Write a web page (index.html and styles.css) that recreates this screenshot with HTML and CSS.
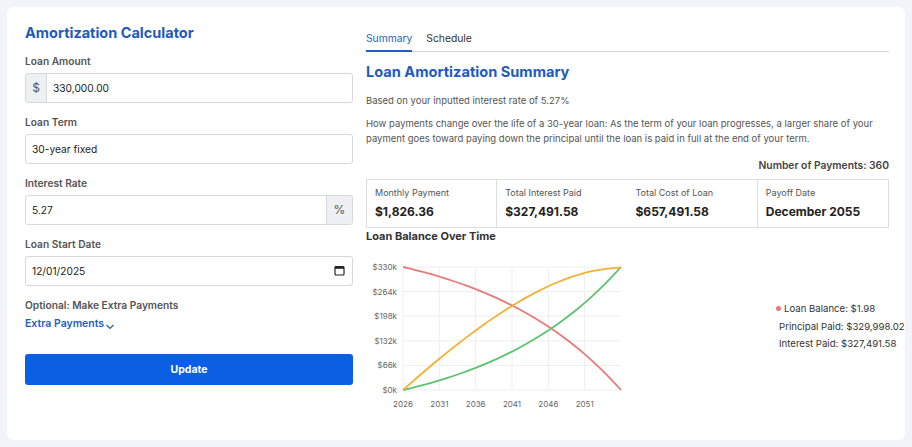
FILE: index.html
```html
<!DOCTYPE html>
<html lang="en">
<head>
<meta charset="utf-8">
<title>Amortization Calculator</title>
<link rel="stylesheet" href="styles.css">
</head>
<body>
<div class="card">
  <section class="form-col">
    <h1 class="title">Amortization Calculator</h1>
    <div class="group">
      <label class="label">Loan Amount</label>
      <div class="field">
        <span class="addon addon-left">$</span>
        <span class="value">330,000.00</span>
      </div>
    </div>
    <div class="group">
      <label class="label">Loan Term</label>
      <div class="field"><span class="value">30-year fixed</span></div>
    </div>
    <div class="group">
      <label class="label">Interest Rate</label>
      <div class="field">
        <span class="value grow">5.27</span>
        <span class="addon addon-right">%</span>
      </div>
    </div>
    <div class="group">
      <label class="label">Loan Start Date</label>
      <div class="field">
        <span class="value grow">12/01/2025</span>
        <svg class="cal" width="11" height="11" viewBox="0 0 11 11"><rect x="1" y="1.5" width="9" height="8.5" rx="1" fill="none" stroke="#222" stroke-width="1.2"/><rect x="1" y="1.5" width="9" height="2.3" fill="#222"/></svg>
      </div>
    </div>
    <div class="label optional">Optional: Make Extra Payments</div>
    <div class="extra">Extra Payments<svg width="10" height="7" viewBox="0 0 10 7"><path d="M1.5 2 L5 5.5 L8.5 2" fill="none" stroke="#1f5fbf" stroke-width="1.2"/></svg></div>
    <button class="btn">Update</button>
  </section>

  <section class="result-col">
    <nav class="tabs">
      <span class="tab active">Summary</span>
      <span class="tab">Schedule</span>
    </nav>
    <h2 class="subtitle">Loan Amortization Summary</h2>
    <p class="note">Based on your inputted interest rate of 5.27%</p>
    <p class="desc">How payments change over the life of a 30-year loan: As the term of your loan progresses, a larger share of your payment goes toward paying down the principal until the loan is paid in full at the end of your term.</p>
    <div class="count">Number of Payments: 360</div>
    <div class="stats">
      <div class="stat sep"><div class="stat-label">Monthly Payment</div><div class="stat-value">$1,826.36</div></div>
      <div class="stat"><div class="stat-label">Total Interest Paid</div><div class="stat-value">$327,491.58</div></div>
      <div class="stat sep"><div class="stat-label">Total Cost of Loan</div><div class="stat-value">$657,491.58</div></div>
      <div class="stat"><div class="stat-label">Payoff Date</div><div class="stat-value">December 2055</div></div>
    </div>
    <h3 class="chart-title">Loan Balance Over Time</h3>
    <div class="chart-row">
      <svg class="chart" width="270" height="170" viewBox="0 0 270 170">
        <g stroke="#eeeeee" stroke-width="1">
          <line x1="37" y1="18" x2="255" y2="18"/>
          <line x1="37" y1="42.6" x2="255" y2="42.6"/>
          <line x1="37" y1="67.2" x2="255" y2="67.2"/>
          <line x1="37" y1="91.8" x2="255" y2="91.8"/>
          <line x1="37" y1="116.4" x2="255" y2="116.4"/>
          <line x1="37" y1="141" x2="255" y2="141"/>
          <line x1="37" y1="18" x2="37" y2="141"/>
          <line x1="73.33" y1="18" x2="73.33" y2="141"/>
          <line x1="109.67" y1="18" x2="109.67" y2="141"/>
          <line x1="146" y1="18" x2="146" y2="141"/>
          <line x1="182.33" y1="18" x2="182.33" y2="141"/>
          <line x1="218.67" y1="18" x2="218.67" y2="141"/>
        </g>
        <g class="ylab" text-anchor="end">
          <text x="31" y="21">$330k</text>
          <text x="31" y="45.6">$264k</text>
          <text x="31" y="70.2">$198k</text>
          <text x="31" y="94.8">$132k</text>
          <text x="31" y="119.4">$66k</text>
          <text x="31" y="144">$0k</text>
        </g>
        <g class="xlab" text-anchor="middle">
          <text x="37" y="158">2026</text>
          <text x="73.33" y="158">2031</text>
          <text x="109.67" y="158">2036</text>
          <text x="146" y="158">2041</text>
          <text x="182.33" y="158">2046</text>
          <text x="218.67" y="158">2051</text>
        </g>
        <polyline fill="none" stroke="#e87a7a" stroke-width="1.8" stroke-linejoin="round" points="37,18 44.27,19.73 51.53,21.55 58.8,23.47 66.07,25.49 73.33,27.62 80.6,29.87 87.87,32.24 95.13,34.74 102.4,37.37 109.67,40.15 116.93,43.07 124.2,46.15 131.47,49.4 138.73,52.82 146,56.43 153.27,60.23 160.53,64.24 167.8,68.46 175.07,72.92 182.33,77.61 189.6,82.56 196.87,87.77 204.13,93.26 211.4,99.06 218.67,105.16 225.93,111.59 233.2,118.38 240.47,125.52 247.73,133.05 255,141"/>
        <polyline fill="none" stroke="#5cc46e" stroke-width="1.8" stroke-linejoin="round" points="37,141 44.27,139.27 51.53,137.45 58.8,135.53 66.07,133.51 73.33,131.38 80.6,129.13 87.87,126.76 95.13,124.26 102.4,121.63 109.67,118.85 116.93,115.93 124.2,112.85 131.47,109.6 138.73,106.18 146,102.57 153.27,98.77 160.53,94.76 167.8,90.54 175.07,86.08 182.33,81.39 189.6,76.44 196.87,71.23 204.13,65.74 211.4,59.94 218.67,53.84 225.93,47.41 233.2,40.62 240.47,33.48 247.73,25.95 255,18"/>
        <polyline fill="none" stroke="#f2b134" stroke-width="1.8" stroke-linejoin="round" points="37,141 44.27,134.56 51.53,128.21 58.8,121.96 66.07,115.81 73.33,109.78 80.6,103.86 87.87,98.06 95.13,92.39 102.4,86.85 109.67,81.46 116.93,76.21 124.2,71.12 131.47,66.2 138.73,61.46 146,56.9 153.27,52.53 160.53,48.37 167.8,44.42 175.07,40.71 182.33,37.23 189.6,34.01 196.87,31.05 204.13,28.38 211.4,26.01 218.67,23.94 225.93,22.2 233.2,20.82 240.47,19.79 247.73,19.15 255,18.6"/>
      </svg>
      <div class="legend">
        <div class="legend-row"><span class="dot"></span>Loan Balance: $1.98</div>
        <div class="legend-row">Principal Paid: $329,998.02</div>
        <div class="legend-row">Interest Paid: $327,491.58</div>
      </div>
    </div>
  </section>
</div>
</body>
</html>
```

FILE: styles.css
```css
* { box-sizing: border-box; }
html, body { margin: 0; }
body {
  padding: 7px;
  background: #f3f4f9;
  font-family: Inter, "Noto Sans", "DejaVu Sans", sans-serif;
  color: #333;
}
.card {
  background: #fff;
  border-radius: 6px;
  height: 433px;
  width: 898px;
  padding: 16px 16px 16px 18px;
  display: grid;
  grid-template-columns: 328px 523px;
  column-gap: 13px;
  align-items: start;
  box-shadow: 0 0 2px rgba(0,0,0,0.04);
}
.title {
  margin: 0 0 11px;
  font-size: 14.5px;
  line-height: 20px;
  font-weight: 700;
  color: #1c5bbf;
}
.group { margin-bottom: 12.5px; }
.label {
  display: block;
  font-size: 10.2px;
  line-height: 14px;
  font-weight: 600;
  color: #555;
  margin-bottom: 4.5px;
}
.field {
  display: flex;
  align-items: center;
  height: 30px;
  border: 1px solid #d6d8dc;
  border-radius: 3px;
  overflow: hidden;
  font-size: 10.2px;
  color: #222;
}
.value { padding: 0 6px; }
.grow { flex: 1; }
.addon {
  align-self: stretch;
  display: flex;
  align-items: center;
  justify-content: center;
  background: #eef0f3;
  color: #555;
  font-size: 12px;
}
.addon-left { width: 21px; border-right: 1px solid #d6d8dc; }
.addon-right { width: 26px; border-left: 1px solid #d6d8dc; }
.cal { margin-right: 7px; }
.optional { margin-top: 6px; margin-bottom: 5px; }
.extra {
  font-size: 10.5px;
  line-height: 14px;
  font-weight: 600;
  color: #1f5fbf;
  display: flex;
  align-items: flex-end;
}
.extra svg { margin-left: 1px; margin-bottom: 1px; }
.btn {
  display: block;
  width: 100%;
  height: 31px;
  margin-top: 23px;
  border: 0;
  border-radius: 3px;
  background: #0a5fe3;
  color: #fff;
  font-family: inherit;
  font-size: 10.5px;
  font-weight: 700;
}
.result-col { min-width: 0; }
.tabs {
  display: flex;
  gap: 14px;
  border-bottom: 1px solid #d0d3d8;
}
.tab {
  font-size: 10.3px;
  line-height: 14px;
  padding: 8px 0 5px;
  color: #333;
  font-weight: 400;
  border-bottom: 2px solid transparent;
  margin-bottom: -1px;
}
.tab.active { color: #1f5fbf; border-bottom-color: #1f5fbf; }
.subtitle {
  margin: 10px 0 0;
  font-size: 14.6px;
  line-height: 20px;
  font-weight: 700;
  color: #1c5bbf;
}
.note, .desc {
  margin: 10.5px 0 0;
  font-size: 9.5px;
  line-height: 15px;
  color: #555;
}
.desc { margin-top: 8px; }
.count {
  margin-top: 12.5px;
  text-align: right;
  font-size: 10.3px;
  line-height: 14px;
  font-weight: 600;
  color: #444;
}
.stats {
  margin-top: 7px;
  display: grid;
  grid-template-columns: repeat(4, 1fr);
  border: 1px solid #dcdee2;
  height: 49px;
}
.stat { padding: 7px 0 0 8px; }
.stat.sep { border-right: 1px solid #dcdee2; }
.stat-label { font-size: 9px; line-height: 12px; color: #555; }
.stat-value {
  margin-top: 5px;
  font-size: 12px;
  line-height: 16px;
  font-weight: 700;
  color: #222;
}
.chart-title {
  margin: 1px 0 0;
  font-size: 11px;
  line-height: 14px;
  font-weight: 700;
  color: #333;
}
.chart-row {
  display: flex;
  align-items: flex-start;
  margin-top: 6px;
}
.chart { display: block; flex: none; }
.ylab text, .xlab text { font-size: 8px; fill: #666; font-family: Inter, "Noto Sans", sans-serif; }
.legend {
  flex: none;
  margin-left: 140px;
  margin-top: 51px;
  font-size: 9.6px;
  line-height: 17.5px;
  color: #333;
  white-space: nowrap;
}
.legend-row { padding-left: 3px; }
.legend-row:first-child { padding-left: 0; }
.dot {
  display: inline-block;
  width: 5px;
  height: 5px;
  border-radius: 50%;
  background: #e87a7a;
  margin-right: 3px;
  vertical-align: 1px;
}
```
